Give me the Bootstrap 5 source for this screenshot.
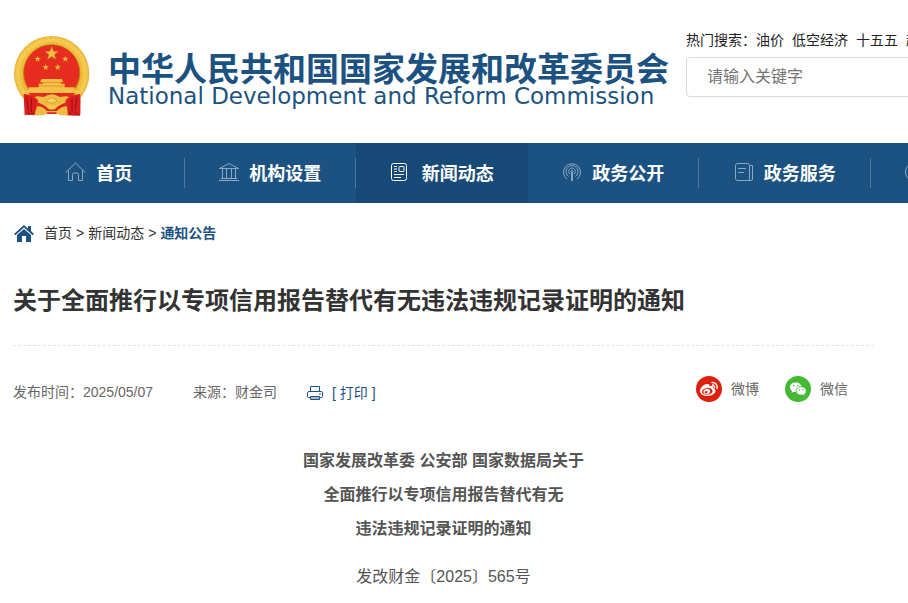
<!DOCTYPE html>
<html lang="zh-CN">
<head>
<meta charset="utf-8">
<meta name="viewport" content="width=device-width, initial-scale=1">
<title>关于全面推行以专项信用报告替代有无违法违规记录证明的通知</title>
<link href="https://cdn.jsdelivr.net/npm/bootstrap@5.3.0/dist/css/bootstrap.min.css" rel="stylesheet">
<style>
  body { font-family: "Liberation Sans", "Noto Sans CJK SC", sans-serif; font-size: 14px; line-height: 20px; color: #333; background: #fff; overflow-x: hidden; }
  a { color: inherit; text-decoration: none; }
  svg { display: block; flex: none; }
  .head-grid { min-width: 1200px; padding: 30px 0 24px 14px; }
  .emblem { width: 76px; height: 81px; margin: 6px 0 2px; }
  .brand { color: #1c5282; width: 672px; }
  .brand-cn { font: 700 33px/34px "Noto Sans CJK SC", sans-serif; }
  .brand-en { font: 23px/24px "DejaVu Sans", sans-serif; }
  .brand-names { padding: 20px 0 0 18px; white-space: nowrap; }
  .hot { gap: 8px; margin-bottom: 7px; color: #222; }
  .search-box { height: 40px; border: 1px solid #d9d9d9; border-radius: 4px; padding: 0 20px; font-size: 16px; }
  .search-box::placeholder { color: #757575; }
  .site-nav { background: #1c5282; }
  .nav-grid { min-width: 1029px; margin-left: 13px; }
  .nav-grid > li { flex: 1 1 0; }
  .nav-grid a { height: 60px; padding-bottom: 2px; color: #fff; font: 700 18px/24px "Noto Sans CJK SC", sans-serif; gap: 10px; position: relative; }
  .nav-grid li:not(:nth-child(3)) a::after { content: ""; position: absolute; right: 0; top: 15px; height: 30px; border-right: 1px solid #4f7aa0; }
  .nav-grid a.current { background: #174a76; gap: 14px; }
  .nav-grid svg { stroke: #8ba8c3; fill: none; }
  .nav-grid .current svg { stroke: #fff; }
  .nav-grid .icon-only { justify-content: start; padding-left: 33px; }
  .crumbs { padding: 20px 14px 0; }
  .crumbs b { color: #1c5282; }
  .crumb-trail { gap: 4px; margin-left: 10px; }
  .article { padding: 0 34px 0 13px; }
  .article h1 { font-size: 24px; line-height: 36px; font-weight: 700; margin: 40px 0 26px; }
  .meta { border-top: 1px dashed #e4e4e4; padding-top: 30px; color: #666; }
  .meta-left { gap: 40px; padding-top: 6px; }
  .print { color: #1c5282; gap: 9px; margin-left: -10px; margin-top: 1px; }
  .share { gap: 26px; padding-right: 26px; }
  .share a { gap: 9px; }
  .doc { color: #555; font-size: 16px; line-height: 34px; text-align: center; padding-top: 41px; }
  .doc p { margin: 0 0 14px; }
</style>
<script src="https://cdn.jsdelivr.net/npm/bootstrap@5.3.0/dist/js/bootstrap.bundle.min.js"></script>
</head>
<body>
<header class="overflow-hidden">
 <div class="head-grid d-flex">
  <a href="#" class="brand d-flex flex-shrink-0">
    <svg class="emblem" viewBox="0 0 228 243" aria-hidden="true">
      <defs>
        <radialGradient id="gold"><stop offset=".72" stop-color="#c98e18"/><stop offset=".78" stop-color="#eeb937"/><stop offset=".91" stop-color="#f7d057"/><stop offset="1" stop-color="#e6b032"/></radialGradient>
        <path id="star" d="M0-10 2.4-3.2 9.5-3.1 3.8 1.2 5.9 8.1 0 4 -5.9 8.1 -3.8 1.2 -9.5-3.1 -2.4-3.2Z"/>
      </defs>
      <path d="M29 172 36 236 72 238 113 218 155 238 198 239 199 172Z" fill="#c91518"/>
      <circle cx="113" cy="113" r="113" fill="url(#gold)"/>
      <g fill="none" stroke="#e3ac30" stroke-width="2" stroke-dasharray="5 9"><circle cx="113" cy="112" r="102"/><circle cx="113" cy="112" r="93" stroke-dashoffset="8"/></g>
      <circle cx="113" cy="110" r="84" fill="#e72c20" stroke="#b97612" stroke-width="2"/>
      <g fill="#f4bd45" stroke="#b96d18" stroke-width=".5">
        <use href="#star" transform="translate(113 53) scale(2.2)"/>
        <use href="#star" transform="translate(71 69)"/><use href="#star" transform="translate(154 69)"/>
        <use href="#star" transform="translate(95 94)"/><use href="#star" transform="translate(131 94)"/>
      </g>
      <path d="M83 129H143L148 138H140V143H152V154H181L187 171H39L45 154H74V143H86V138H78Z" fill="#f5c047"/>
      <path d="M79 139H147M75 150H151" stroke="#cf831e" stroke-width="2"/>
      <path d="M43 171H184L173 183H54Z" fill="#e32a20"/>
      <path d="M29 174Q53 174 72 193L69 237 59 226 51 236 44 225 32 240Z" fill="#db1f20"/>
      <path d="M199 174Q175 174 154 193L158 237 168 226 177 240 184 225 199 238Z" fill="#db1f20"/>
      <path d="M38 183 43 222M52 187 52 229M188 183 184 222M174 187 174 229" stroke="#9c0f15" stroke-width="3"/>
      <path d="M66 180 90 183Q113 166 137 183L161 180 152 199Q133 193 113 207 93 193 75 199Z" fill="#f0bd43"/>
      <path d="M65 199Q88 203 101 217 113 226 126 217 139 203 162 199L159 230Q140 217 127 234H99Q85 217 68 230Z" fill="#df251f"/>
      <path d="M69 211Q86 210 99 225H128Q143 210 159 211L162 238H137L126 229H101L90 238H61Z" fill="#edba42"/>
      <path d="M97 195Q113 175 129 195 113 207 97 195Z" fill="#f7d164" stroke="#d19326" stroke-width="2"/>
    </svg>
    <div class="brand-names">
      <div class="brand-cn">中华人民共和国国家发展和改革委员会</div>
      <div class="brand-en">National Development and Reform Commission</div>
    </div>
  </a>
  <form class="flex-grow-1">
    <div class="hot d-flex"><span>热门搜索：<a href="#">油价</a></span><a href="#">低空经济</a><a href="#">十五五</a><a href="#">超长期国债</a></div>
    <input class="search-box w-100" type="text" placeholder="请输入关键字" aria-label="请输入关键字">
  </form>
 </div>
</header>

<nav class="site-nav overflow-hidden">
  <ul class="nav-grid list-unstyled d-flex mb-0">
    <li><a href="#" class="d-flex align-items-center justify-content-center">
      <svg width="21" height="20" viewBox="0 0 21 20"><path d="M.7 10.5 10.5 1 20.3 10.5M3.5 8.5V18.5H7.5V12.5Q7.5 11 9 11H12Q13.5 11 13.5 12.5V18.5H17.5V8.5"/></svg>首页</a></li>
    <li><a href="#" class="d-flex align-items-center justify-content-center">
      <svg width="20" height="20" viewBox="0 0 20 20"><path d="M.5 6.5 10 1.5 19.5 6.5ZM0 18.5H20M2 16.5H18M3.5 7V16M7.5 7V16M12.5 7V16M16.5 7V16"/></svg>机构设置</a></li>
    <li><a href="#" class="current d-flex align-items-center justify-content-center" aria-current="page">
      <svg width="18" height="20" viewBox="0 0 18 20"><rect x="1.5" y="1.5" width="15" height="17" rx="2"/><rect x="9" y="4.5" width="5" height="5" rx="1"/><path d="M4 4.5H7M4 7H7M4 9.5H7M4 12.5H14M4 15.5H11"/></svg>新闻动态</a></li>
    <li><a href="#" class="d-flex align-items-center justify-content-center">
      <svg width="20" height="20" viewBox="0 0 20 20"><path d="M5 17.2A8.500 8.500 0 1 1 15 17.2M6.500 14.5A6 6 0 1 1 13.500 14.5M8 12A3.300 3.300 0 1 1 12 12"/><circle cx="10" cy="9.500" r="1"/><path d="M10 10V19" stroke-width="2"/></svg>政务公开</a></li>
    <li><a href="#" class="d-flex align-items-center justify-content-center">
      <svg width="20" height="20" viewBox="0 0 20 20"><rect x="1.500" y="1.500" width="14" height="17" rx="2"/><path d="M4 6.500H12M4 10.500H10M15.500 3.500H18.500V17Q18.500 18.500 17 18.500H14"/></svg>政务服务</a></li>
    <li><a href="#" class="icon-only d-flex align-items-center" aria-label="互动交流">
      <svg width="20" height="20" viewBox="0 0 20 20"><circle cx="10" cy="10" r="8.500"/><path d="M6 10H14"/></svg></a></li>
  </ul>
</nav>

<nav class="crumbs d-flex align-items-center" aria-label="当前位置">
  <svg width="20" height="17" viewBox="0 0 20 17" fill="#1c5282"><path d="M10 0 14 3.500V1H17V6L20 9 18.700 10.300 10 2.500 1.300 10.300 0 9ZM3 10 10 4 17 10V17H12V11H8V17H3Z"/></svg>
  <div class="crumb-trail d-flex"><a href="#">首页</a><span>&gt;</span><a href="#">新闻动态</a><span>&gt;</span><a href="#"><b>通知公告</b></a></div>
</nav>

<main class="article">
  <h1>关于全面推行以专项信用报告替代有无违法违规记录证明的通知</h1>
  <div class="meta d-flex justify-content-between align-items-start">
    <div class="meta-left d-flex">
      <span>发布时间：2025/05/07</span><span>来源：财金司</span>
      <a href="#" class="print d-flex align-items-center">
        <svg width="16" height="16" viewBox="0 0 16 16" fill="none" stroke="#1c5282"><path d="M3.500 7V1.500H12.500V7M3 12.500H1.500Q.5 12.500 .5 11.500V8Q.5 6.500 2 6.500H14Q15.500 6.500 15.500 8V11.500Q15.500 12.500 14.500 12.500H13"/><path d="M3.500 11.500H12.500V14.500H3.500Z" fill="#a5bbce"/><path d="M12 9H14"/></svg><span>[ 打印 ]</span></a>
    </div>
    <div class="share d-flex">
      <a href="#" class="d-flex align-items-center"><svg width="26" height="26" viewBox="0 0 26 26"><circle cx="13" cy="13" r="13" fill="#dc200c"/><path d="M11.800 8.100C9 7.400 4 11.300 4 15c0 3 3.500 5 7.500 5 4.500 0 8-2.500 8-5.200 0-1.600-1.200-2.300-2.300-2.600.6-2-.6-2.800-3.700-1.700.4-1.200 0-2.100-1.700-2.400Z" fill="#fff"/><ellipse cx="11.300" cy="15.400" rx="5.300" ry="3.500" fill="#dc200c" transform="rotate(-8 11.300 15.400)"/><ellipse cx="10.800" cy="15.600" rx="3.300" ry="2.700" fill="#fff" transform="rotate(-20 10.800 15.600)"/><circle cx="10" cy="16.200" r="1.200" fill="#dc200c"/><circle cx="12" cy="15" r=".5" fill="#dc200c"/><path d="M16 6.500A4.600 4.600 0 0 1 21 12.400M16.500 9A2.200 2.200 0 0 1 18.600 11.600" fill="none" stroke="#fff" stroke-width="1.400" stroke-linecap="round"/></svg>微博</a>
      <a href="#" class="d-flex align-items-center"><svg width="26" height="26" viewBox="0 0 26 26"><circle cx="13" cy="13" r="13" fill="#45b935"/><path d="M10.700 6.500C7.500 6.500 5 8.500 5 11.200c0 1.500.8 2.800 2.100 3.700L6.600 16.800 8.800 15.700q.9.200 1.900.2c3.200 0 5.800-2 5.800-4.700S13.900 6.500 10.700 6.500Z" fill="#fff"/><path d="M16.200 10.700c-2.900 0-5.100 1.800-5.100 4.200s2.200 4.200 5.100 4.200q.9 0 1.700-.2l1.900 1-.5-1.700c1.200-.8 1.900-1.900 1.900-3.300 0-2.400-2.200-4.200-5-4.200Z" fill="#fff" stroke="#45b935" stroke-width=".8"/><g fill="#45b935"><circle cx="8.800" cy="9.700" r=".8"/><circle cx="12.600" cy="9.700" r=".8"/><circle cx="14.500" cy="13.700" r=".7"/><circle cx="17.900" cy="13.700" r=".7"/></g></svg>微信</a>
    </div>
  </div>
  <article class="doc">
    <p><strong>国家发展改革委 公安部 国家数据局关于<br>全面推行以专项信用报告替代有无<br>违法违规记录证明的通知</strong></p>
    <p>发改财金〔2025〕565号</p>
  </article>
</main>
</body>
</html>
